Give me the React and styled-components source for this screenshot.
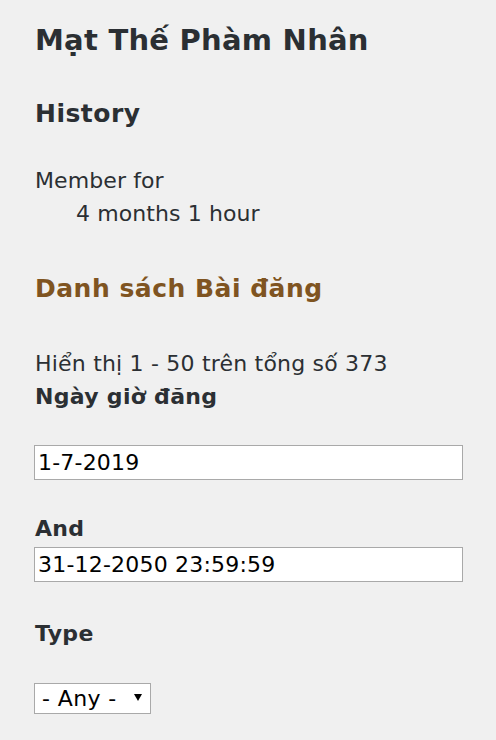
import React from 'react';
import styled, { createGlobalStyle } from 'styled-components';

const GlobalStyle = createGlobalStyle`
  html, body {
    margin: 0;
    padding: 0;
    background: #f0f0f0;
  }
  body {
    font-family: "DejaVu Sans", Verdana, sans-serif;
    color: #2b2f33;
  }
`;

const Page = styled.div`
  padding: 22px 33px 0 35px;
  display: flex;
  flex-direction: column;
`;

const Title = styled.h1`
  margin: 0;
  font-size: 29px;
  line-height: 36px;
  font-weight: bold;
  letter-spacing: 0.25px;
`;

const Heading = styled.h2`
  margin: ${({ $top }) => $top}px 0 0;
  font-size: 25px;
  line-height: 32px;
  font-weight: bold;
  letter-spacing: 0.5px;
  color: ${({ $accent }) => ($accent ? '#7f5421' : '#2b2f33')};
`;

const Details = styled.dl`
  margin: 34px 0 0;
  font-size: 22px;
  line-height: 33px;
  letter-spacing: 0.1px;
  dt {
    margin: 0;
  }
  dd {
    margin: 0 0 0 41px;
  }
`;

const Text = styled.p`
  margin: 42px 0 0;
  font-size: 22px;
  line-height: 33px;
  letter-spacing: 0.2px;
`;

const Label = styled.label`
  display: block;
  margin: ${({ $top }) => $top}px 0 0;
  font-size: 22px;
  line-height: 33px;
  font-weight: bold;
  letter-spacing: 0.3px;
`;

const Field = styled.input`
  box-sizing: border-box;
  display: block;
  width: 429px;
  height: 35px;
  margin: ${({ $top }) => $top}px 0 0 -1px;
  padding: 2px 3px;
  border: 1px solid #a9a9a9;
  border-radius: 0;
  background: #fff;
  font-family: "DejaVu Sans", Verdana, sans-serif;
  font-size: 22px;
  letter-spacing: 0.2px;
  color: #000;
  outline: none;
`;

const SelectWrap = styled.span`
  position: relative;
  display: inline-block;
  align-self: flex-start;
  margin: 33px 0 0 -1px;
`;

const Select = styled.select`
  box-sizing: border-box;
  appearance: none;
  width: 117px;
  height: 31px;
  padding: 0 0 0 7px;
  border: 1px solid #a9a9a9;
  border-radius: 0;
  background: #fff;
  font-family: "DejaVu Sans", Verdana, sans-serif;
  font-size: 22px;
  line-height: 27px;
  letter-spacing: 0.4px;
  color: #000;
  outline: none;
`;

const Arrow = styled.svg`
  position: absolute;
  right: 9px;
  top: 11px;
  pointer-events: none;
`;

export default function App() {
  return (
    <>
      <GlobalStyle />
      <Page>
        <Title>Mạt Thế Phàm Nhân</Title>
        <Heading $top={40}>History</Heading>
        <Details>
          <dt>Member for</dt>
          <dd>4 months 1 hour</dd>
        </Details>
        <Heading $top={43} $accent>Danh sách Bài đăng</Heading>
        <Text>Hiển thị 1 - 50 trên tổng số 373</Text>
        <Label $top={0}>Ngày giờ đăng</Label>
        <Field $top={32} defaultValue="1-7-2019" />
        <Label $top={32}>And</Label>
        <Field $top={2} defaultValue="31-12-2050 23:59:59" />
        <Label $top={35}>Type</Label>
        <SelectWrap>
          <Select defaultValue="any">
            <option value="any">- Any -</option>
          </Select>
          <Arrow width="8" height="7" viewBox="0 0 8 7">
            <path d="M0 0 H8 L4 7 Z" fill="#000" />
          </Arrow>
        </SelectWrap>
      </Page>
    </>
  );
}
